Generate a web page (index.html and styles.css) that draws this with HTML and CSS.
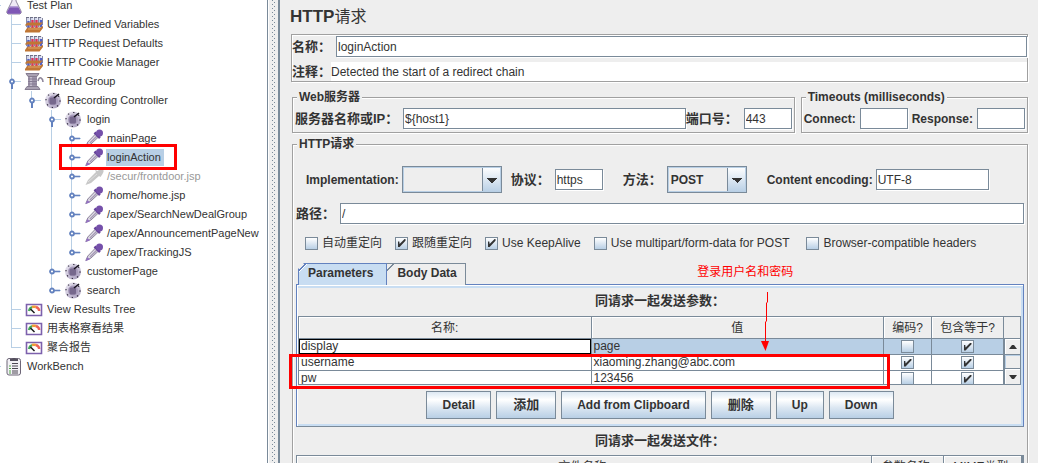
FILE: index.html
```html
<!DOCTYPE html>
<html lang="zh-CN">
<head>
<meta charset="utf-8">
<title>HTTP请求</title>
<link rel="stylesheet" href="styles.css">
</head>
<body>
<svg class="defs" aria-hidden="true">
  <defs>
    <linearGradient id="purple" x1="0" y1="0" x2="1" y2="1"><stop offset="0" stop-color="#eeebf4"/><stop offset="1" stop-color="#a398ba"/></linearGradient>
    <symbol id="i-flask" viewBox="0 0 20 19">
      <path d="M7 0h6M8 0v5L3 15q-1 2 1 3h12q2-1 1-3L12 5V0z" fill="#efeaf6" stroke="#8f87a0"/>
      <path d="M6 10.500h8l2.800 5q.6 1.500-.8 2.300H4q-1.400-.8-.8-2.300z" fill="#7e57b5"/>
      <path d="M6 11h8" stroke="#b9a2da"/>
    </symbol>
    <symbol id="i-rack" viewBox="0 0 20 19">
      <path d="M4 2v12M8 2v12M12 2v12M16 2v12" stroke="#d3d6ea" stroke-width="3"/>
      <path d="M2.500 3v9M6.500 2v10M10.500 2v10M14.500 2v10M18.500 3v7" stroke="#868aa2"/>
      <path d="M2 2.500h3M6 2.500h3M10 2.500h3M14 2.500h3" stroke="#6e7086"/>
      <path d="M4.500 6v7M17 5v7" stroke="#5060c8" stroke-width="2.400"/>
      <path d="M8.500 5v8M12.500 5v8" stroke="#d8375f" stroke-width="2.400"/>
      <path d="M1 10l2.500-2.500h15.500L16 10.500H1zM1 16l2.500-3.500h13L19 11v2l-3.500 4.500H1z" fill="#c07634"/>
      <path d="M4 14h12" stroke="#e0a468"/>
    </symbol>
    <symbol id="i-spool" viewBox="0 0 20 19">
      <path d="M14 9q1-4 3-3t2 4" fill="none" stroke="#8f879b" stroke-width="1.600"/>
      <path d="M4 4h9v11H4z" fill="#9d94a9"/><path d="M6 4h2v11H6z" fill="#c4bdcd"/>
      <path d="M4 7h9M4 9.500h9M4 12h9" stroke="#857b93"/>
      <path d="M2 1.500h13l-2 3H4zM1 17.500l2-3h11l2 3z" fill="#aaa2b3" stroke="#857c90"/>
    </symbol>
    <symbol id="i-controller" viewBox="0 0 20 19">
      <circle cx="9" cy="9.500" r="8" fill="url(#purple)"/>
      <circle cx="9" cy="9.500" r="7" fill="none" stroke="#292333" stroke-width="1.200" stroke-dasharray="1.200 4.300"/>
      <circle cx="9" cy="9.500" r="5" fill="#a79bbb"/>
      <rect x="5.500" y="6.500" width="6.500" height="7" rx="1.500" fill="#76688d"/>
      <path d="M10 7l5-4" stroke="#17131e" stroke-width="1.600"/>
    </symbol>
    <symbol id="i-dropper" viewBox="0 0 20 19">
      <path d="M1.800 17.500l2-4.500L12 4.500l3 3L7 15z" fill="#dedae4" stroke="#8b839a"/>
      <path d="M1.500 18l2-4 2.500 2.500z" fill="#9370c2"/>
      <path d="M6 14l7-7" stroke="#a69bb6" stroke-width="1.500"/>
      <path d="M10.500 3.500l5.500 5.500" stroke="#68459b" stroke-width="2.500"/>
      <circle cx="15.500" cy="4" r="3.500" fill="#7550aa"/>
    </symbol>
    <symbol id="i-dropper-off" viewBox="0 0 20 19">
      <path d="M1.500 18l2.500-5 8-8-1-2 3 1q1-3 4-2t.5 5l-2 3-1.500-1-8 7z" fill="#c7c7c7"/>
      <path d="M4 15l9-8" stroke="#dedede"/>
    </symbol>
    <symbol id="i-gauge" viewBox="0 0 20 19">
      <path d="M2.500 4.500h15v11h-15z" fill="#fff" stroke="#7d61ad" stroke-width="1.600"/>
      <path d="M5 11q.5-3 3-4" fill="none" stroke="#45a658" stroke-width="2.400"/>
      <path d="M8 7q2-.6 4 0" fill="none" stroke="#f09b35" stroke-width="2.400"/>
      <path d="M12 7q3 1 3.200 4" fill="none" stroke="#ed6256" stroke-width="2.400"/>
      <path d="M6.500 9l4 4" stroke="#151515" stroke-width="1.400"/>
    </symbol>
    <symbol id="i-clipboard" viewBox="0 0 20 19">
      <rect x="3" y="1.500" width="13.500" height="16.500" rx="2" fill="#f3f1f6" stroke="#6d6677"/>
      <path d="M6 4V2h2l1-1h2l1 1h2v2z" fill="#55505e"/>
      <path d="M8 6.500h6M8 9h6M8 11.500h6M8 14h6M8 16h6" stroke="#4c4753"/>
      <path d="M5 9h2M5 11.500h2M5 14h2M5 16h2" stroke="#51a844"/>
    </symbol>
    <symbol id="i-open" viewBox="0 0 12 19">
      <path d="M6 9.500h6" stroke="#b8cfe5"/><path d="M4 11v6" stroke="#6382bf" stroke-width="2"/>
      <circle cx="4" cy="9.500" r="2" fill="#fff" stroke="#6382bf" stroke-width="1.800"/>
    </symbol>
    <symbol id="i-closed" viewBox="0 0 12 19">
      <path d="M5 9.500h7" stroke="#6382bf" stroke-width="1.600"/>
      <circle cx="4" cy="9.500" r="2" fill="#fff" stroke="#6382bf" stroke-width="1.800"/>
    </symbol>
  </defs>
</svg>
<div class="app">
  <nav class="sidebar">
    <ul class="tree">
      <li><div class="node"><span class="handle"></span><svg class="icon"><use href="#i-flask"/></svg><span class="name">Test Plan</span></div>
        <ul>
          <li><div class="node"><span class="handle"></span><svg class="icon"><use href="#i-rack"/></svg><span class="name">User Defined Variables</span></div></li>
          <li><div class="node"><span class="handle"></span><svg class="icon"><use href="#i-rack"/></svg><span class="name">HTTP Request Defaults</span></div></li>
          <li><div class="node"><span class="handle"></span><svg class="icon"><use href="#i-rack"/></svg><span class="name">HTTP Cookie Manager</span></div></li>
          <li><div class="node"><svg class="handle"><use href="#i-open"/></svg><svg class="icon"><use href="#i-spool"/></svg><span class="name">Thread Group</span></div>
            <ul>
              <li><div class="node"><svg class="handle"><use href="#i-open"/></svg><svg class="icon"><use href="#i-controller"/></svg><span class="name">Recording Controller</span></div>
                <ul>
                  <li><div class="node"><svg class="handle"><use href="#i-open"/></svg><svg class="icon"><use href="#i-controller"/></svg><span class="name">login</span></div>
                    <ul>
                      <li><div class="node"><svg class="handle"><use href="#i-closed"/></svg><svg class="icon"><use href="#i-dropper"/></svg><span class="name">mainPage</span></div></li>
                      <li><div class="node marked"><svg class="handle"><use href="#i-closed"/></svg><svg class="icon"><use href="#i-dropper"/></svg><span class="name selected">loginAction</span></div></li>
                      <li><div class="node"><svg class="handle"><use href="#i-closed"/></svg><svg class="icon"><use href="#i-dropper-off"/></svg><span class="name disabled">/secur/frontdoor.jsp</span></div></li>
                      <li><div class="node"><svg class="handle"><use href="#i-closed"/></svg><svg class="icon"><use href="#i-dropper"/></svg><span class="name">/home/home.jsp</span></div></li>
                      <li><div class="node"><svg class="handle"><use href="#i-closed"/></svg><svg class="icon"><use href="#i-dropper"/></svg><span class="name">/apex/SearchNewDealGroup</span></div></li>
                      <li><div class="node"><svg class="handle"><use href="#i-closed"/></svg><svg class="icon"><use href="#i-dropper"/></svg><span class="name">/apex/AnnouncementPageNew</span></div></li>
                      <li><div class="node"><svg class="handle"><use href="#i-closed"/></svg><svg class="icon"><use href="#i-dropper"/></svg><span class="name">/apex/TrackingJS</span></div></li>
                    </ul>
                  </li>
                  <li><div class="node"><svg class="handle"><use href="#i-closed"/></svg><svg class="icon"><use href="#i-controller"/></svg><span class="name">customerPage</span></div></li>
                  <li><div class="node"><svg class="handle"><use href="#i-closed"/></svg><svg class="icon"><use href="#i-controller"/></svg><span class="name">search</span></div></li>
                </ul>
              </li>
            </ul>
          </li>
          <li><div class="node"><span class="handle"></span><svg class="icon"><use href="#i-gauge"/></svg><span class="name">View Results Tree</span></div></li>
          <li><div class="node"><span class="handle"></span><svg class="icon"><use href="#i-gauge"/></svg><span class="name">用表格察看结果</span></div></li>
          <li><div class="node"><span class="handle"></span><svg class="icon"><use href="#i-gauge"/></svg><span class="name">聚合报告</span></div></li>
        </ul>
      </li>
      <li><div class="node"><span class="handle"></span><svg class="icon"><use href="#i-clipboard"/></svg><span class="name">WorkBench</span></div></li>
    </ul>
  </nav>
  <div class="splitter"></div>
  <main class="editor">
    <h1>HTTP<span class="light">请求</span></h1>
    <div class="identity">
      <div class="line"><label class="wide" for="name">名称：</label><input class="field grow" id="name" type="text" value="loginAction"></div>
      <div class="line"><label for="comment">注释：</label><input class="field plain grow" id="comment" type="text" value="Detected the start of a redirect chain"></div>
    </div>
    <div class="groups">
      <fieldset class="group server">
        <legend>Web服务器</legend>
        <div class="line">
          <label class="host-label" for="host">服务器名称或IP：</label><input class="field grow" id="host" type="text" value="${host1}">
          <label class="port-label" for="port">端口号：</label><input class="field" id="port" type="text" value="443">
        </div>
      </fieldset>
      <fieldset class="group timeouts">
        <legend>Timeouts (milliseconds)</legend>
        <div class="line spaced">
          <label class="latin" for="connect">Connect:</label><input class="field" id="connect" type="text">
          <label class="latin" for="response">Response:</label><input class="field" id="response" type="text">
        </div>
      </fieldset>
    </div>
    <fieldset class="group request">
      <legend>HTTP请求</legend>
      <div class="line options">
        <div class="pair tight"><label class="latin" for="impl">Implementation:</label><select class="combo wide-combo" id="impl"><option></option></select></div>
        <div class="pair"><label for="protocol">协议：</label><input class="field" id="protocol" type="text" value="https"></div>
        <div class="pair method"><label for="method">方法：</label><select class="combo" id="method"><option>POST</option></select></div>
        <div class="pair tight"><label class="latin" for="encoding">Content encoding:</label><input class="field encoding" id="encoding" type="text" value="UTF-8"></div>
      </div>
      <div class="line path"><label class="path-label" for="path">路径：</label><input class="field grow" id="path" type="text" value="/"></div>
      <div class="checks">
        <label><input type="checkbox">自动重定向</label>
        <label><input type="checkbox" checked>跟随重定向</label>
        <label><input type="checkbox" checked>Use KeepAlive</label>
        <label><input type="checkbox">Use multipart/form-data for POST</label>
        <label><input type="checkbox">Browser-compatible headers</label>
      </div>
      <div class="tabs" role="tablist">
        <button class="tab active" role="tab" aria-selected="true">Parameters</button>
        <button class="tab" role="tab" aria-selected="false">Body Data</button>
        <div class="note">登录用户名和密码
          <svg class="arrow" viewBox="0 0 10 60"><path d="M7.500 0v10l-1 1v18l-1 1v20" fill="none" stroke="#f00" stroke-width="1"/><path d="M1 49h8l-3.500 10z" fill="#f00"/></svg>
        </div>
      </div>
      <div class="panel" role="tabpanel">
        <h2>同请求一起发送参数：</h2>
        <div class="grid">
          <div class="viewport">
            <table>
              <colgroup><col><col><col class="c-encode"><col class="c-equals"></colgroup>
              <thead><tr><th>名称:</th><th>值</th><th>编码?</th><th>包含等于?</th></tr></thead>
              <tbody>
                <tr class="picked"><td class="focus">display</td><td>page</td><td class="tick"><input type="checkbox" aria-label="编码 display"></td><td class="tick"><input type="checkbox" aria-label="包含等于 display" checked></td></tr>
                <tr><td>username</td><td>xiaoming.zhang@abc.com</td><td class="tick"><input type="checkbox" aria-label="编码 username" checked></td><td class="tick"><input type="checkbox" aria-label="包含等于 username" checked></td></tr>
                <tr><td>pw</td><td>123456</td><td class="tick"><input type="checkbox" aria-label="编码 pw"></td><td class="tick"><input type="checkbox" aria-label="包含等于 pw" checked></td></tr>
              </tbody>
            </table>
          </div>
          <div class="scroller">
            <span class="corner"></span>
            <button aria-label="向上滚动"><svg viewBox="0 0 8 4"><path d="M0 4h8L5 0H3z"/></svg></button>
            <span class="thumb"></span>
            <button aria-label="向下滚动"><svg viewBox="0 0 8 4"><path d="M0 0h8L5 4H3z"/></svg></button>
          </div>
          <div class="highlight"></div>
        </div>
        <div class="actions">
          <button class="button">Detail</button><button class="button cjk">添加</button><button class="button">Add from Clipboard</button><button class="button cjk">删除</button><button class="button">Up</button><button class="button">Down</button>
        </div>
      </div>
      <h2>同请求一起发送文件：</h2>
      <div class="files">
        <table>
          <colgroup><col><col class="c-param"><col class="c-mime"></colgroup>
          <thead><tr><th>文件名称:</th><th>参数名称:</th><th>MIME类型:</th></tr></thead>
        </table>
      </div>
    </fieldset>
  </main>
</div>
</body>
</html>
```
FILE: styles.css
```css
*, *::before, *::after { box-sizing: border-box; }

:root {
  --line: #7a8a99;
  --face: #eee;
  --blue: #6382bf;
  --soft: #c8ddf2;
  --pick: #b8cfe5;
  --ink: #333;
}

body {
  margin: 0;
  background: var(--face);
  color: var(--ink);
  font: 12px/14px "Liberation Sans", Arial, "Noto Sans CJK SC", sans-serif;
}

button, input, select { font: inherit; color: inherit; margin: 0; }

.defs { position: absolute; width: 0; height: 0; }

.app { display: flex; height: 100vh; overflow: hidden; }

/* Tree */
.sidebar {
  flex: 0 0 268px;
  background: #fff;
  border-right: 1px solid var(--line);
  overflow: hidden;
  font-size: 11px;
}

.tree, .tree ul { list-style: none; margin: 0; padding: 0; }
.tree { margin: -4px 0 0 -20px; }
.tree ul { margin-left: 20px; }

.tree li {
  background:
    linear-gradient(var(--pick), var(--pick)) 11px 0 / 1px 100% no-repeat,
    linear-gradient(var(--pick), var(--pick)) 11px 9px / 10px 1px no-repeat;
}
.tree li:last-child {
  background-size: 1px 10px, 10px 1px;
}

.node { position: relative; display: flex; align-items: center; height: 19px; padding-left: 8px; }
.handle { flex: none; width: 12px; height: 19px; }
.icon { flex: none; width: 20px; height: 19px; margin: 0 2px 0 4px; }
.name { padding: 0 3px 0 1px; line-height: 17px; white-space: nowrap; }
.selected { background: var(--pick); }
.disabled { color: #999; }

.marked::after {
  content: "";
  position: absolute;
  left: -1px;
  top: -4px;
  width: 118px;
  height: 26px;
  border: 3px solid #f00;
  z-index: 1;
}

.splitter {
  flex: 0 0 12px;
  padding: 0 2px 0 3px;
  border-left: 1px solid #fff;
  border-right: 2px solid var(--line);
  background:
    conic-gradient(at 1px 1px, transparent 270deg, #7a8a99 270deg) 0 0 / 4px 4px content-box content-box,
    conic-gradient(at 1px 1px, transparent 270deg, #7a8a99 270deg) 2px 2px / 4px 4px content-box content-box,
    var(--face);
}

/* Editor */
.editor { flex: 1; min-width: 0; padding: 0 10px; }

h1 { margin: 0; font-size: 17px; line-height: 34px; }
.light { font-size: 16px; font-weight: 400; }
h2 { margin: 0; font-size: 13px; line-height: 28px; text-align: center; }

.identity {
  display: grid;
  gap: 5px;
  margin-left: 1px;
  padding-top: 1px;
  border: 1px solid #a0a0a0;
  box-shadow: 1px 1px 0 #fff, inset 1px 1px 0 #fff;
}

.line { display: flex; align-items: center; }
.line label { font-size: 13px; font-weight: bold; white-space: nowrap; flex: none; width: 39px; }
.line label.latin { font-size: 12px; width: auto; }
.line label.wide { width: 44px; }
.line label.host-label { width: 108px; }
.line label.port-label { width: 58px; }
.line label.path-label { width: 44px; }

.field {
  width: 48px;
  height: 21px;
  padding: 0 1px;
  border: 1px solid var(--line);
  border-radius: 0;
  background: #fff;
  box-shadow: 1px 1px 0 #fff;
}
.field.grow { flex: 1; min-width: 0; }
.field.plain { height: 19px; border: 0; box-shadow: none; padding: 0; }
.field.encoding { width: 113px; }

.groups { display: flex; gap: 6px; margin: 8px 0 0 2px; }

.group {
  min-width: 0;
  margin: 0;
  padding: 4px 2px 3px;
  border: 1px solid #a0a0a0;
  box-shadow: 1px 1px 0 #fff, inset 1px 1px 0 #fff;
}
.group legend { margin-left: 2px; padding: 0 2px; height: 14px; background: var(--face); font-weight: bold; }
.server { flex: 1; }
.spaced { gap: 4px; }

.request { margin: 4px 0 0 2px; padding: 15px 3px 20px; }
.request legend { margin-left: 1px; }
.options { gap: 9px; padding-left: 10px; white-space: nowrap; }
.pair { display: flex; align-items: center; gap: 5px; }
.pair.tight { gap: 3px; }
.method { margin: 0 11px; }

.combo {
  appearance: none;
  width: 80px;
  height: 27px;
  padding: 0 22px 0 3px;
  border: 1px solid var(--line);
  border-radius: 0;
  font-weight: bold;
  box-shadow: inset 1px 1px 0 var(--pick), inset -1px -1px 0 var(--pick);
  background:
    conic-gradient(from -45deg at 50% 100%, #333 90deg, transparent 0) 0 0 / 0 0 no-repeat,
    var(--face);
  background:
    conic-gradient(from -60deg at 50% 100%, #333 120deg, transparent 0) right 4px top 11px / 10px 5px no-repeat,
    var(--face);
}
.combo {
  background:
    conic-gradient(from -45deg at 50% 100%, #333 90deg, transparent 0) right 4px top 11px / 10px 5px no-repeat,
    linear-gradient(var(--line), var(--line)) right 18px top 0 / 1px 100% no-repeat,
    linear-gradient(#fff, #dce7f2 50%, var(--pick)) right / 18px 100% no-repeat,
    var(--face);
}
.wide-combo { width: 100px; }

.path { margin-top: 10px; }

.checks { display: flex; gap: 13px; margin: 12px 0 13px 9px; height: 14px; }
.checks label { display: flex; align-items: center; gap: 4px; white-space: nowrap; }
.checks label:last-child { margin-left: 4px; }

input[type="checkbox"] {
  appearance: none;
  flex: none;
  width: 13px;
  height: 13px;
  border: 1px solid var(--line);
  background: linear-gradient(#fff, #dce7f2 50%, var(--pick));
  display: inline-grid;
  place-items: center;
}
input[type="checkbox"]:checked::before {
  content: "";
  width: 8px;
  height: 8px;
  background: var(--ink);
  clip-path: polygon(0 30%, 22% 30%, 26% 62%, 88% 0, 100% 0, 100% 22%, 26% 100%, 0 100%);
}

/* Tabs */
.tabs { position: relative; display: flex; margin: 0 0 -1px 2px; }
.tab {
  height: 22px;
  padding: 0 8px 3px 10px;
  border: 1px solid var(--line);
  border-left: 0;
  border-bottom: 0;
  font-weight: bold;
  background: linear-gradient(135deg, var(--face) 4px, var(--line) 4px 5px, var(--face) 5px);
}
.tab.active {
  padding: 0 13px 3px 9px;
  border: 1px solid var(--blue);
  border-bottom: 0;
  background: linear-gradient(135deg, var(--face) 4px, var(--blue) 4px 5px, #fff 5px 6px, var(--soft) 6px);
  clip-path: polygon(0 6px, 6px 0, 100% 0, 100% 100%, 0 100%);
  z-index: 1;
}

.note { position: absolute; left: 55%; top: 2px; color: #f00; white-space: nowrap; z-index: 2; }
.arrow { position: absolute; left: 63px; top: 27px; width: 10px; height: 60px; }

.panel {
  border: 1px solid var(--blue);
  border-bottom-color: var(--line);
  padding: 1px 1px 5px;
  box-shadow: inset 0 1px 0 #fff, inset 1px 0 0 #fff, inset 0 3px 0 var(--soft), inset -2px -2px 0 var(--soft);
}
.panel h2 { line-height: 30px; }

.grid { position: relative; display: flex; height: 69px; margin-right: 1px; border: 1px solid var(--line); }
.viewport { flex: 1; min-width: 0; overflow: hidden; }

table { width: 100%; table-layout: fixed; border-collapse: separate; border-spacing: 0; }
th {
  height: 22px;
  padding: 0;
  font-weight: normal;
  border-right: 1px solid var(--line);
  border-bottom: 1px solid var(--line);
  background: var(--face);
  box-shadow: inset 1px 1px 0 #fff;
}
td {
  height: 16px;
  padding: 0 2px;
  line-height: 15px;
  border-right: 1px solid var(--line);
  border-bottom: 1px solid var(--line);
  background: #fff;
  overflow: hidden;
}
.picked td { background: var(--pick); }
.picked td.focus { background: #fff; box-shadow: inset 0 0 0 1px #000; }
.tick { text-align: center; line-height: 0; }
.tick input { vertical-align: top; }
.c-encode { width: 48px; }
.c-equals { width: 72px; }
.c-param { width: 72px; }
.c-mime { width: 78px; }

.scroller { display: grid; grid-template-rows: 22px 16px 1fr 16px; width: 16px; border-left: 1px solid var(--line); }
.corner { border-bottom: 1px solid var(--line); margin-left: -1px; background: var(--face); }
.scroller button {
  display: grid;
  place-items: center;
  padding: 0;
  border: 0;
  border-bottom: 1px solid var(--line);
  background: var(--face);
  box-shadow: inset 1px 1px 0 #fff;
}
.scroller button:last-child { border-bottom: 0; border-top: 1px solid var(--line); }
.scroller svg { width: 8px; height: 4px; fill: #333; }
.thumb { border-top: 1px solid var(--pick); border-left: 1px solid var(--pick); }

.highlight { position: absolute; left: -10px; right: 130px; top: 37px; bottom: -5px; border: 3px solid #f00; }

.actions { display: flex; justify-content: center; gap: 5px; padding: 6px 0 2px; }
.button {
  height: 28px;
  padding: 0 15px;
  border: 1px solid var(--line);
  border-radius: 0;
  font-weight: bold;
  background: linear-gradient(#dde8f3, #fff 30%, #dce7f2 60%, var(--pick));
  white-space: nowrap;
}
.button.cjk { padding: 0 16px; font-size: 13px; }

.files { border: 1px solid var(--line); border-right-width: 2px; }
.files th { line-height: 16px; }
```
